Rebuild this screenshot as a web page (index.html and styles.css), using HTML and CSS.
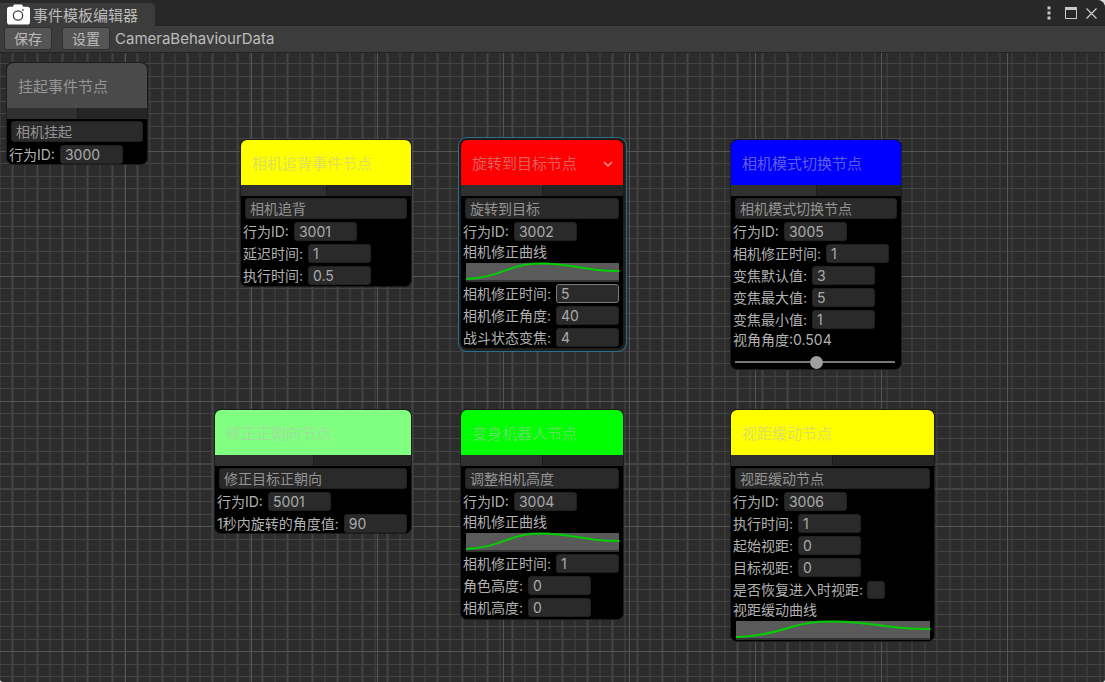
FILE: index.html
```html
<!DOCTYPE html>
<html lang="zh">
<head>
<meta charset="utf-8">
<title>事件模板编辑器</title>
<link rel="stylesheet" href="styles.css">
</head>
<body>
<div class="app">
  <div class="tabbar">
    <div class="tab">
      <svg class="cam" viewBox="0 0 24 21"><path fill="#fff" fill-rule="evenodd" d="M7.500 0h8l1.500 2.500H21a3 3 0 0 1 3 3V18a3 3 0 0 1-3 3H3a3 3 0 0 1-3-3V5.500a3 3 0 0 1 3-3h3zM11.500 6a5.500 5.500 0 1 0 0 11a5.500 5.500 0 0 0 0-11zM11.500 7.300a4.200 4.200 0 1 1 0 8.400a4.200 4.200 0 0 1 0-8.400zM16 5h1.500v1.500H16z"/></svg>
      <span>事件模板编辑器</span>
    </div>
    <div class="winbtns">
      <svg class="kebab" viewBox="0 0 4 14"><path fill="#c8c8c8" d="M0.500 0.500h3v3h-3zM0.500 5.500h3v3h-3zM0.500 10.500h3v3h-3z"/></svg>
      <svg class="maxi" viewBox="0 0 12 12"><path fill="#c8c8c8" fill-rule="evenodd" d="M0 0h12v12H0zM1 3v8h10V3z"/></svg>
      <svg class="close" viewBox="0 0 11 11"><path stroke="#c8c8c8" stroke-width="1.300" fill="none" d="M0.500 0.500l10 10M10.500 0.500l-10 10"/></svg>
    </div>
  </div>
  <div class="toolbar">
    <button class="btn">保存</button>
    <button class="btn">设置</button>
    <span class="asset">CameraBehaviourData</span>
  </div>
  <div class="canvas">

    <div class="node n1">
      <div class="head h-gray">挂起事件节点</div>
      <div class="ports"><i></i><i></i></div>
      <div class="body">
        <div class="name">相机挂起</div>
        <div class="row"><label>行为ID:</label><div class="inp">3000</div></div>
      </div>
    </div>

    <div class="node n2">
      <div class="head h-yellow">相机追背事件节点</div>
      <div class="ports"><i></i><i></i></div>
      <div class="body">
        <div class="name">相机追背</div>
        <div class="row"><label>行为ID:</label><div class="inp">3001</div></div>
        <div class="row"><label>延迟时间:</label><div class="inp">1</div></div>
        <div class="row"><label>执行时间:</label><div class="inp">0.5</div></div>
      </div>
    </div>

    <div class="node n3 selected">
      <div class="head h-red">旋转到目标节点
        <svg class="chev" viewBox="0 0 10 6"><path d="M1 1l4 4l4-4" fill="none" stroke="#f09090" stroke-width="1.600"/></svg>
      </div>
      <div class="ports"><i></i><i></i></div>
      <div class="body">
        <div class="name">旋转到目标</div>
        <div class="row"><label>行为ID:</label><div class="inp">3002</div></div>
        <div class="text">相机修正曲线</div>
        <div class="curve"><svg viewBox="0 0 100 16" preserveAspectRatio="none"><path d="M0 15.500C10 15.500 18 12 28 6C36 2 40 0.500 50 0.500C62 0.500 72 4 84 6.500C90 7.500 95 7.800 100 7.800"/></svg></div>
        <div class="row"><label>相机修正时间:</label><div class="inp focus">5</div></div>
        <div class="row"><label>相机修正角度:</label><div class="inp">40</div></div>
        <div class="row"><label>战斗状态变焦:</label><div class="inp">4</div></div>
      </div>
    </div>

    <div class="node n4">
      <div class="head h-blue">相机模式切换节点</div>
      <div class="ports"><i></i><i></i></div>
      <div class="body">
        <div class="name">相机模式切换节点</div>
        <div class="row"><label>行为ID:</label><div class="inp">3005</div></div>
        <div class="row"><label>相机修正时间:</label><div class="inp">1</div></div>
        <div class="row"><label>变焦默认值:</label><div class="inp">3</div></div>
        <div class="row"><label>变焦最大值:</label><div class="inp">5</div></div>
        <div class="row"><label>变焦最小值:</label><div class="inp">1</div></div>
        <div class="text">视角角度:0.504</div>
        <div class="slider"><b></b></div>
      </div>
    </div>

    <div class="node n5">
      <div class="head h-mint">修正正朝向节点</div>
      <div class="ports"><i></i><i></i></div>
      <div class="body">
        <div class="name">修正目标正朝向</div>
        <div class="row"><label>行为ID:</label><div class="inp">5001</div></div>
        <div class="row"><label>1秒内旋转的角度值:</label><div class="inp">90</div></div>
      </div>
    </div>

    <div class="node n6">
      <div class="head h-green">变身机器人节点</div>
      <div class="ports"><i></i><i></i></div>
      <div class="body">
        <div class="name">调整相机高度</div>
        <div class="row"><label>行为ID:</label><div class="inp">3004</div></div>
        <div class="text">相机修正曲线</div>
        <div class="curve"><svg viewBox="0 0 100 16" preserveAspectRatio="none"><path d="M0 15.500C10 15.500 18 12 28 6C36 2 40 0.500 50 0.500C62 0.500 72 4 84 6.500C90 7.500 95 7.800 100 7.800"/></svg></div>
        <div class="row"><label>相机修正时间:</label><div class="inp">1</div></div>
        <div class="row"><label>角色高度:</label><div class="inp">0</div></div>
        <div class="row"><label>相机高度:</label><div class="inp">0</div></div>
      </div>
    </div>

    <div class="node n7">
      <div class="head h-yellow">视距缓动节点</div>
      <div class="ports"><i></i><i></i></div>
      <div class="body">
        <div class="name">视距缓动节点</div>
        <div class="row"><label>行为ID:</label><div class="inp">3006</div></div>
        <div class="row"><label>执行时间:</label><div class="inp">1</div></div>
        <div class="row"><label>起始视距:</label><div class="inp">0</div></div>
        <div class="row"><label>目标视距:</label><div class="inp">0</div></div>
        <div class="row"><label>是否恢复进入时视距:</label><div class="check"></div></div>
        <div class="text">视距缓动曲线</div>
        <div class="curve"><svg viewBox="0 0 100 16" preserveAspectRatio="none"><path d="M0 15.500C10 15.500 18 12 28 6C36 2 40 0.500 50 0.500C62 0.500 72 4 84 6.500C90 7.500 95 7.800 100 7.800"/></svg></div>
      </div>
    </div>

  </div>
</div>
</body>
</html>
```
FILE: styles.css
```css
* { box-sizing: border-box; }
html, body { margin: 0; height: 100%; background: #d8d8d8; overflow: hidden; }
body { font-family: Inter, "Noto Sans CJK SC", sans-serif; font-size: 14px; color: #b2b2b2; }

.app {
  width: 1105px; height: 682px;
  display: flex; flex-direction: column;
  background: #282828;
  overflow: hidden;
  border-radius: 0 8px 4px 4px;
}

/* title bar */
.tabbar {
  height: 26px; flex: none;
  display: flex; justify-content: space-between; align-items: flex-end;
  background: #282828;
  border-bottom: 1px solid #232323;
}
.tab {
  width: 155px; height: 23px;
  display: flex; align-items: center;
  padding-left: 7px;
  background: #3c3c3c;
  border-radius: 0 5px 0 0;
  font-size: 15px;
  color: #bcbcbc;
  margin-bottom: -1px;
}
.cam { width: 23px; height: 21px; flex: none; margin-right: 3px; }
.winbtns { display: flex; align-items: center; height: 26px; padding-right: 8px; margin-bottom: -1px; }
.kebab { width: 4px; height: 14px; margin-right: 14px; }
.maxi { width: 12px; height: 12px; margin-right: 9px; }
.close { width: 11px; height: 11px; }

/* toolbar */
.toolbar {
  height: 27px; flex: none;
  display: flex; align-items: center;
  padding: 0 0 1px 4px;
  background: #3c3c3c;
  border-bottom: 1px solid #232323;
}
.btn {
  width: 48px; height: 23px;
  margin: 0 10px 0 0; padding: 0 0 1px;
  background: #555;
  border: 1px solid #303030;
  border-radius: 3px;
  font: inherit;
  color: #bcbcbc;
}
.asset { margin-left: -5px; font-size: 15px; color: #bcbcbc; }

/* graph canvas */
.canvas {
  position: relative;
  flex: 1;
  background-color: #2c2c2c;
  background-image:
    repeating-linear-gradient(to right, transparent 0 125px, #555 125px 126px, transparent 126px 125px),
    repeating-linear-gradient(to bottom, transparent 0 98px, #555 98px 99px, transparent 99px 125px),
    repeating-linear-gradient(to right, #434343 0 1px, transparent 1px 12.5px),
    repeating-linear-gradient(to bottom, transparent 0 10.500px, #434343 10.500px 11.500px, transparent 11.500px 12.500px);
  background-position: 0 0, 0 0, -0.500px 0, 0 0;
}

/* nodes */
.node {
  position: absolute;
  display: flex; flex-direction: column;
  background: #000;
  border: 1px solid #1c1c1c;
  border-radius: 7px;
}
.n1 { left: 6px;   top: 9px;   width: 142px; height: 103px; }
.n2 { left: 240px; top: 86px;  width: 172px; height: 148px; }
.n3 { left: 460px; top: 86px;  width: 164px; height: 210px; }
.n4 { left: 730px; top: 86px;  width: 172px; height: 231px; }
.n5 { left: 214px; top: 356px; width: 198px; height: 125px; }
.n6 { left: 460px; top: 356px; width: 164px; height: 211px; }
.n7 { left: 730px; top: 356px; width: 205px; height: 233px; }

.selected { box-shadow: 0 0 0 2px #202020; }
.selected::after {
  content: "";
  position: absolute;
  inset: -3.500px;
  border: 1.500px solid #2c708e;
  border-radius: 9px;
  pointer-events: none;
}

.head {
  position: relative;
  height: 45px; flex: none;
  display: flex; align-items: center;
  padding: 0 0 1px 11px;
  border-radius: 6px 6px 0 0;
  font-size: 15px;
  color: rgba(190, 190, 190, 0.5);
}
.h-gray   { background: #4a4a4a; color: #969696; }
.h-yellow { background: #ff0; }
.h-red    { background: #f00; }
.h-blue   { background: #00f; }
.h-mint   { background: #80ff80; }
.h-green  { background: #0f0; }
.chev { position: absolute; right: 10px; top: 21px; width: 10px; height: 6px; }

.ports { height: 11px; flex: none; display: flex; }
.ports i { flex: 1; background: #252525; }
.ports i:first-child { background: #303030; border-right: 1px solid #1c1c1c; }

.body { padding: 2px 4px 0 2px; display: flex; flex-direction: column; gap: 3px; }

.name {
  height: 21px;
  margin-left: 2px;
  padding-left: 4px;
  background: #2a2a2a;
  border: 1px solid #212121;
  border-radius: 3px;
  line-height: 19px;
  color: #949494;
}
.row { height: 19px; display: flex; align-items: center; }
.row label { white-space: nowrap; margin-right: 5px; line-height: 19px; }
.inp {
  width: 63px; height: 19px; flex: none;
  margin-left: auto;
  padding-left: 4px;
  background: #2a2a2a;
  border: 1px solid #212121;
  border-radius: 3px;
  line-height: 17px;
  color: #aaa;
}
.focus { border-color: #7a7a7a; }
.row label + .inp { margin-left: 0; }
.check {
  width: 18px; height: 18px;
  margin-left: -1px;
  background: #2a2a2a;
  border: 1px solid #212121;
  border-radius: 3px;
}
.text { height: 16px; line-height: 16px; white-space: nowrap; }

.curve {
  height: 18.500px;
  margin: 0 0 -0.500px 2.500px;
  background: #5a5a5a;
  border-bottom: 2px solid #333;
}
.curve svg { display: block; width: 100%; height: 100%; overflow: visible; }
.curve path { fill: none; stroke: #00d000; stroke-width: 2; vector-effect: non-scaling-stroke; }

.slider {
  position: relative;
  height: 22px;
  margin: 0 2px 0 2px;
}
.slider::before {
  content: "";
  position: absolute;
  left: 0; right: 0; top: 10px;
  height: 2px;
  background: #777;
}
.slider b {
  position: absolute;
  left: 75px; top: 4.500px;
  width: 13px; height: 13px;
  border-radius: 50%;
  background: #a0a0a0;
}
```
